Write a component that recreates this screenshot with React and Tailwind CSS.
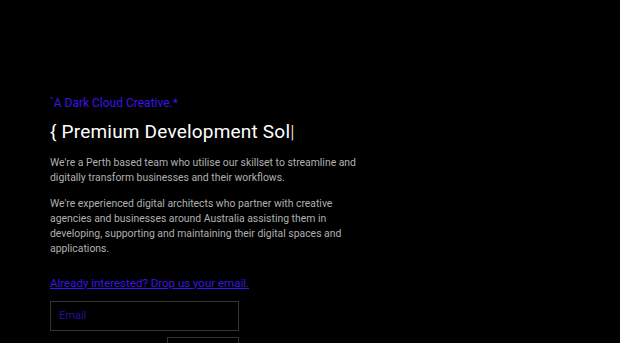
import React from "react";

const App = () => {
  return (
    <div className="min-h-screen w-full bg-black overflow-hidden" style={{ fontFamily: "Roboto, 'Liberation Sans', sans-serif" }}>
      <div className="pl-[50px] pt-[95px] w-[380px]">
        {/* Eyebrow */}
        <p className="text-[#3f12e8] text-[12px] leading-[16px]">`A Dark Cloud Creative.*</p>

        {/* Heading */}
        <h1 className="mt-[9px] text-white text-[19px] leading-[24px] tracking-[0.2px]">
          {"{ Premium Development Sol"}<span className="font-light">|</span>
        </h1>

        {/* Copy */}
        <div className="mt-[11px] w-[306px] flex flex-col gap-[10px] text-[#b0b0b0] text-[10.4px] leading-[15.3px]">
          <p>We're a Perth based team who utilise our skillset to streamline and digitally transform businesses and their workflows.</p>
          <p>We're experienced digital architects who partner with creative agencies and businesses around Australia assisting them in developing, supporting and maintaining their digital spaces and applications.</p>
        </div>

        {/* CTA */}
        <a href="#" className="mt-[18px] block text-[#3f12e8] text-[11.5px] leading-[16px] underline">
          Already interested? Drop us your email.
        </a>

        <form className="mt-[10px] flex flex-col items-start w-[189px]">
          <input
            type="email"
            placeholder="Email"
            className="w-[189px] h-[30px] bg-black border border-[#333333] px-[8px] text-[11px] text-white placeholder-[#2d0c9a] outline-none"
          />
          <button type="button" className="mt-[6px] self-end w-[72px] h-[30px] border border-[#333333] bg-black"></button>
        </form>
      </div>
    </div>
  );
};

export default App;
